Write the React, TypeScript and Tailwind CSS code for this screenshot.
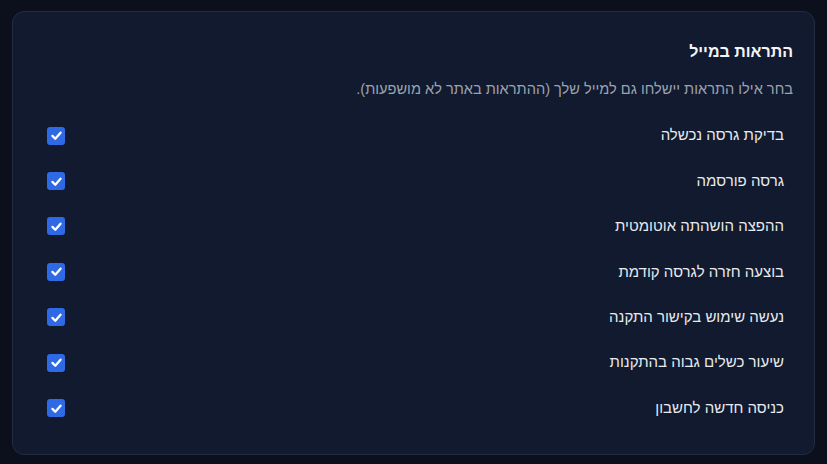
import React, { useState } from "react";

const items = [
  "בדיקת גרסה נכשלה",
  "גרסה פורסמה",
  "ההפצה הושהתה אוטומטית",
  "בוצעה חזרה לגרסה קודמת",
  "נעשה שימוש בקישור התקנה",
  "שיעור כשלים גבוה בהתקנות",
  "כניסה חדשה לחשבון",
];

function Check({ on, onToggle }: { on: boolean; onToggle: () => void }) {
  return (
    <button
      type="button"
      role="checkbox"
      aria-checked={on}
      onClick={onToggle}
      className={`flex h-[18px] w-[18px] items-center justify-center rounded-[3px] ${
        on ? "bg-[#2f6ae6]" : "border border-[#4b5563] bg-transparent"
      }`}
    >
      {on && (
        <svg viewBox="0 0 16 16" className="h-[13px] w-[13px]">
          <path
            d="M3 8.5 L6.5 12 L13 4.5"
            fill="none"
            stroke="white"
            strokeWidth="2.8"
            strokeLinecap="round"
            strokeLinejoin="round"
          />
        </svg>
      )}
    </button>
  );
}

export default function App() {
  const [checked, setChecked] = useState(items.map(() => true));
  return (
    <div
      dir="rtl"
      className="min-h-[464px] w-full bg-[#0b101c] px-3 pb-[10px] pt-[11px]"
      style={{ fontFamily: '"Liberation Sans", "DejaVu Sans", sans-serif' }}
    >
      <div className="rounded-xl border border-[#232c40] bg-[#111a2e] pb-[23px] pl-6 pr-[21px] pt-[28px]">
        <h2 className="text-[16px] font-bold leading-6 text-[#f3f4f6]">התראות במייל</h2>
        <p className="mt-[15px] text-[14.6px] leading-5 text-[#9ca3af]">
          בחר אילו התראות יישלחו גם למייל שלך (ההתראות באתר לא מושפעות).
        </p>
        <div className="mt-[14px] flex flex-col">
          {items.map((label, i) => (
            <div key={label} className="flex h-[45.4px] items-center justify-between pl-[10px] pr-[9px]">
              <span className="text-[15px] text-[#e8eaee]">{label}</span>
              <Check
                on={checked[i]}
                onToggle={() => setChecked((c) => c.map((v, j) => (j === i ? !v : v)))}
              />
            </div>
          ))}
        </div>
      </div>
    </div>
  );
}
